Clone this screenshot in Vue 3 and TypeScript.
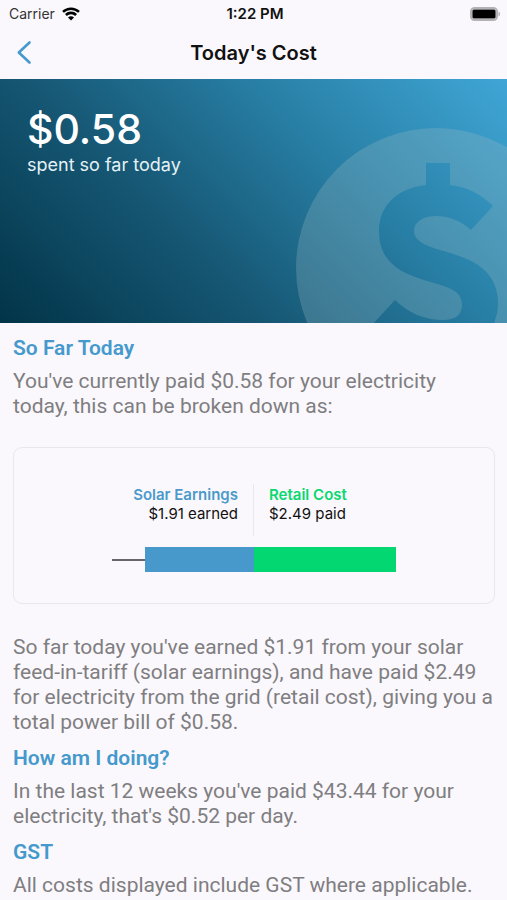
<script setup lang="ts">
import { computed } from 'vue'

interface Share {
  key: 'solar' | 'retail'
  label: string
  amount: number
  verb: string
}

const shares: Share[] = [
  { key: 'solar', label: 'Solar Earnings', amount: 1.91, verb: 'earned' },
  { key: 'retail', label: 'Retail Cost', amount: 2.49, verb: 'paid' },
]

const money = (value: number): string => `$${value.toFixed(2)}`

const largest = computed(() => Math.max(...shares.map((s) => s.amount)))
const barWidth = (share: Share): string => `${(share.amount / largest.value) * 100}%`
</script>

<template>
  <div class="screen">
    <div class="status">
      <div class="carrier">
        <span>Carrier</span>
        <svg class="wifi" viewBox="0 0 18 14" aria-hidden="true">
          <path d="M1 4.900C5.500.600 12.500.600 17 4.900" />
          <path d="M3.900 8C6.800 5.200 11.200 5.200 14.100 8" />
          <path class="dot" d="M9 13.500 6 10.500C7.700 8.900 10.300 8.900 12 10.500Z" />
        </svg>
      </div>
      <span class="time">1:22 PM</span>
      <svg class="battery" viewBox="0 0 31 14" aria-hidden="true">
        <rect class="case" x="1" y="1" width="26" height="12" rx="3.600" />
        <rect x="2.400" y="2.400" width="23.200" height="9.200" rx="1.600" />
        <path class="tip" d="M28.500 4.500C30.600 5.200 30.600 8.800 28.500 9.500Z" />
      </svg>
    </div>

    <header class="nav">
      <button class="back" type="button" aria-label="Back">
        <svg viewBox="0 0 16 26" aria-hidden="true"><path d="M13.500 2.500 2.800 12.500 13.500 22.500" /></svg>
      </button>
      <h1>Today's Cost</h1>
    </header>

    <section class="hero">
      <svg class="coin" viewBox="0 0 280 280" aria-hidden="true">
        <path
          fill-rule="evenodd"
          d="M140 0A140 140 0 1 1 140 280A140 140 0 1 1 140 0Z
             M130 35V57C102 60 83 77 83 103C83 125 94 138 112 146C128 153 141 155 153 160C162 164 166 169 166 177C166 187 159 192 147 192C129 192 112 185 99 172L76 197C91 212 109 221 130 223V245H154V223C184 220 202 201 202 175C202 155 192 141 173 132C155 124 140 122 128 116C121 112 118 108 118 103C118 94 127 88 140 88C153 88 165 93 175 102L197 78C185 66 171 59 154 57V35Z"
        />
      </svg>
      <p class="total">$0.58</p>
      <p class="caption">spent so far today</p>
    </section>

    <main class="content">
      <h2>So Far Today</h2>
      <p>You've currently paid $0.58 for your electricity today, this can be broken down as:</p>

      <div class="card">
        <div class="chart">
          <div class="legend">
            <div v-for="s in shares" :key="s.key" class="entry" :class="s.key">
              <strong>{{ s.label }}</strong>
              <span>{{ money(s.amount) }} {{ s.verb }}</span>
            </div>
          </div>
          <div class="bars">
            <div v-for="s in shares" :key="s.key" class="half" :class="s.key">
              <div class="bar" :style="{ width: barWidth(s) }"></div>
            </div>
          </div>
        </div>
      </div>

      <p>
        So far today you've earned $1.91 from your solar feed-in-tariff (solar earnings), and have
        paid $2.49 for electricity from the grid (retail cost), giving you a total power bill of
        $0.58.
      </p>
      <h2>How am I doing?</h2>
      <p>In the last 12 weeks you've paid $43.44 for your electricity, that's $0.52 per day.</p>
      <h2>GST</h2>
      <p>All costs displayed include GST where applicable.</p>
    </main>
  </div>
</template>

<style>
body {
  background: #faf8fc;
}
</style>

<style scoped>
.screen {
  font-family: Inter, 'Liberation Sans', sans-serif;
  color: #111;
  background: #faf8fc;
  overflow: hidden;
}
h1,
h2,
p {
  margin: 0;
}
.status {
  display: grid;
  grid-template-columns: 1fr auto 1fr;
  align-items: center;
  height: 27px;
  padding: 0 6px 0 9px;
  font-size: 14px;
}
.carrier {
  display: flex;
  align-items: center;
  gap: 7px;
  color: #333;
}
.wifi {
  width: 18px;
  height: 14px;
  fill: none;
  stroke: #000;
  stroke-width: 2.6;
}
.wifi .dot {
  fill: #000;
  stroke: none;
}
.time {
  font-size: 15px;
  font-weight: 600;
}
.battery {
  justify-self: end;
  width: 31px;
  height: 14px;
}
.battery .case {
  fill: none;
  stroke: #b3b1b5;
  stroke-width: 2;
}
.battery .tip {
  fill: #b3b1b5;
}
.nav {
  display: grid;
  grid-template-columns: 48px 1fr 48px;
  align-items: center;
  height: 52px;
}
.nav h1 {
  text-align: center;
  font-size: 20px;
  line-height: 24px;
  font-weight: 600;
}
.back {
  display: flex;
  align-items: center;
  height: 44px;
  padding: 0 0 0 16px;
  border: 0;
  background: none;
}
.back svg {
  width: 16px;
  height: 26px;
  fill: none;
  stroke: #4599cd;
  stroke-width: 2.6;
  stroke-linecap: round;
  stroke-linejoin: round;
}
.hero {
  position: relative;
  box-sizing: border-box;
  height: 244px;
  padding: 25px 27px;
  overflow: hidden;
  color: #fff;
  background: linear-gradient(45deg, #023448, #165774 36%, #287fa5 66%, #40a6d6);
}
.coin {
  position: absolute;
  top: 49px;
  right: -69px;
  width: 280px;
  height: 280px;
  fill: rgba(160, 190, 195, 0.27);
}
.total {
  font-size: 41px;
  line-height: 50px;
  font-weight: 500;
}
.caption {
  font-size: 18px;
  line-height: 22px;
  color: #e6f1f6;
}
.content {
  padding: 12px 12px 3px 13px;
  font-family: Roboto, 'Liberation Sans', sans-serif;
}
.content h2 {
  font-size: 21px;
  line-height: 26px;
  font-weight: 600;
  color: #4599cd;
}
.content p {
  padding: 8px 0 10px;
  font-size: 21px;
  line-height: 25px;
  color: #7f7e81;
}
.card {
  margin: 18px 0 23px;
  padding: 36px 16px 31px;
  border: 1px solid #e9e7eb;
  border-radius: 9px;
  font-family: Inter, 'Liberation Sans', sans-serif;
}
.chart {
  width: 60%;
  min-width: 284px;
  margin: 0 auto;
}
.legend,
.bars {
  display: grid;
  grid-template-columns: 1fr 1fr;
}
.entry {
  display: flex;
  flex-direction: column;
  height: 52px;
  padding: 1px 15px 0;
  box-sizing: border-box;
  font-size: 15px;
  line-height: 19px;
  white-space: nowrap;
}
.entry strong {
  font-weight: 600;
}
.entry.solar {
  align-items: flex-end;
  border-right: 1px solid #e9e7eb;
}
.entry.solar strong {
  color: #4b9acb;
}
.entry.retail strong {
  color: #08d870;
}
.bars {
  margin-top: 11px;
  background: linear-gradient(#67656a, #67656a) center / 100% 2px no-repeat;
}
.half {
  display: flex;
}
.half.solar {
  justify-content: flex-end;
}
.bar {
  height: 25px;
}
.solar .bar {
  background: #4799cb;
}
.retail .bar {
  background: #02d772;
}
</style>
